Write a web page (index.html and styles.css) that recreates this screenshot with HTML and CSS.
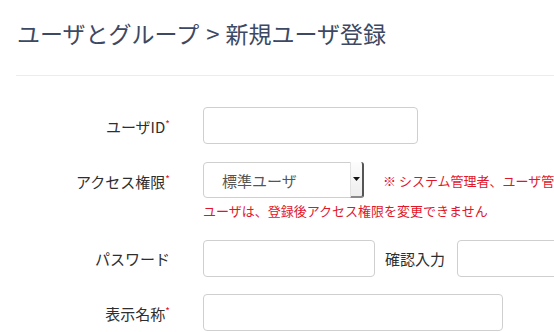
FILE: index.html
```html
<!DOCTYPE html>
<html lang="ja">
<head>
<meta charset="utf-8">
<link rel="stylesheet" href="styles.css">
</head>
<body>
<div class="page">
  <h1 class="title">ユーザとグループ<span class="sep">&gt;</span>新規ユーザ登録</h1>
  <div class="divider"></div>
  <form class="form">
    <div class="row row-1">
      <label class="label">ユーザID<span class="req">*</span></label>
      <div class="field">
        <input class="input w-id" type="text">
      </div>
    </div>
    <div class="row row-2">
      <label class="label">アクセス権限<span class="req">*</span></label>
      <div class="field">
        <div class="select">
          <span class="select-text">標準ユーザ</span>
          <span class="select-arrow">
            <svg width="7" height="4" viewBox="0 0 7 4"><path d="M0 0H7L3.5 4Z" fill="#111"/></svg>
          </span>
        </div>
        <span class="note">※ システム管理者、ユーザ管理者の権限を持つユーザのみ</span>
      </div>
    </div>
    <div class="help">ユーザは、登録後アクセス権限を変更できません</div>
    <div class="row row-3">
      <label class="label">パスワード</label>
      <div class="field">
        <input class="input w-pw" type="password">
        <span class="sub-label">確認入力</span>
        <input class="input w-pw2" type="password">
      </div>
    </div>
    <div class="row row-4">
      <label class="label">表示名称<span class="req">*</span></label>
      <div class="field">
        <input class="input w-name" type="text">
      </div>
    </div>
  </form>
</div>
</body>
</html>
```
FILE: styles.css
```css
html, body {
  margin: 0;
  padding: 0;
  overflow: hidden;
  background: #fff;
}
body {
  font-family: "Noto Sans CJK JP", "Noto Sans", sans-serif;
  color: #333;
}
.page {
  padding-left: 16px;
  width: 700px;
}
.title {
  margin: 20px 0 0 1px;
  font-size: 23px;
  line-height: 26px;
  font-weight: 400;
  color: #3d4963;
  white-space: nowrap;
}
.sep {
  display: inline-block;
  margin: 0 6px 0 7px;
  font-size: 24px;
}
.divider {
  height: 1px;
  background: #ececec;
  margin-top: 29px;
}
.form {
  padding-top: 31px;
}
.row {
  display: flex;
  align-items: center;
}
.label {
  width: 154px;
  flex: none;
  text-align: right;
  font-size: 15px;
  line-height: 20px;
  color: #2e2e2e;
  margin-right: 33px;
  white-space: nowrap;
}
.req {
  color: #e8101e;
  font-size: 10px;
  vertical-align: 5px;
  margin-left: 0;
}
.field {
  display: flex;
  align-items: center;
}
.input {
  box-sizing: border-box;
  height: 37px;
  border: 1px solid #cfcfcf;
  border-radius: 4px;
  background: #fff;
  margin: 0;
  padding: 0 8px;
  outline: none;
}
.w-id { width: 215px; }
.w-pw { width: 172px; }
.w-pw2 { width: 200px; }
.w-name { width: 300px; }
.row-1 { height: 37px; margin-bottom: 18px; }
.row-2 { height: 36px; }
.select {
  position: relative;
  box-sizing: border-box;
  width: 161px;
  height: 36px;
  border: 1px solid #cfcfcf;
  border-radius: 4px;
  background: #fff;
  display: flex;
  align-items: center;
  padding-left: 18px;
}
.select-text {
  font-size: 15px;
  color: #555;
}
.select-arrow {
  position: absolute;
  top: -1px;
  right: -1px;
  bottom: -1px;
  width: 14px;
  box-sizing: border-box;
  border-left: 1px solid #e2e2e2;
  border-right: 2px solid #555;
  border-bottom: 2px solid #888;
  border-radius: 0 3px 3px 0;
  background: linear-gradient(#fdfdfd, #ededed);
  display: flex;
  align-items: center;
  justify-content: center;
}
.note {
  margin-left: 19px;
  font-size: 13px;
  color: #e0162b;
  white-space: nowrap;
}
.help {
  margin: 4px 0 20px 187px;
  font-size: 13px;
  line-height: 18px;
  color: #e0162b;
  white-space: nowrap;
}
.row-3 { height: 37px; margin-bottom: 17px; }
.sub-label {
  margin: 0 12px 0 10px;
  font-size: 15px;
  color: #2e2e2e;
  white-space: nowrap;
}
.row-4 { height: 37px; }
```
